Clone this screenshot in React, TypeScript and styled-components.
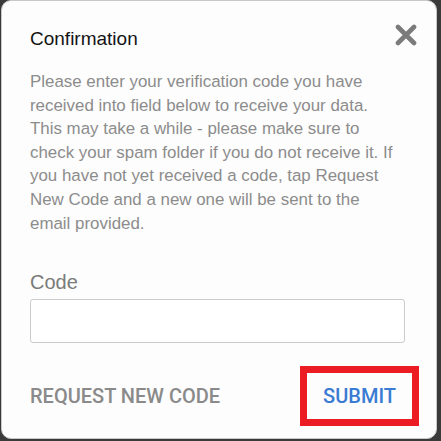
import React from "react";
import styled, { createGlobalStyle } from "styled-components";

const Global = createGlobalStyle`
  html, body {
    margin: 0;
    padding: 0;
    background: #3a3a3a;
    width: 441px;
    height: 441px;
    overflow: hidden;
  }
  * { box-sizing: border-box; }
`;

const Page = styled.div`
  width: 441px;
  height: 441px;
  padding: 0 4px 2px 1px;
`;

const Card = styled.div`
  width: 436px;
  height: 439px;
  background: #fdfdfd;
  border: 1px solid #c9c9c9;
  border-radius: 10px;
  padding: 0 32px 0 28px;
  display: flex;
  flex-direction: column;
  font-family: "Liberation Sans", Arial, sans-serif;
`;

const Header = styled.div`
  margin-top: 23px;
  display: flex;
  justify-content: space-between;
  align-items: flex-start;
`;

const Title = styled.h2`
  margin: 4px 0 0 0;
  font-size: 19px;
  line-height: 22px;
  font-weight: 400;
  color: #141414;
`;

const CloseButton = styled.button`
  width: 22px;
  height: 22px;
  padding: 0;
  margin-right: -13px;
  border: none;
  background: transparent;
  display: flex;
  cursor: pointer;
`;

const Body = styled.p`
  margin: 20px 0 0 0;
  font-size: 16.9px;
  line-height: 23.6px;
  color: #8c8c8c;
`;

const Label = styled.label`
  margin-top: 35px;
  font-size: 20px;
  line-height: 24px;
  color: #7a7a7a;
`;

const Input = styled.input`
  margin-top: 5px;
  width: 375px;
  height: 44px;
  border: 1.5px solid #cbcbcb;
  border-radius: 3px;
  background: #fff;
  outline: none;
`;

const Actions = styled.div`
  margin-top: 23px;
  display: flex;
  justify-content: space-between;
  align-items: center;
`;

const TextButton = styled.button<{ $primary?: boolean; $boxed?: boolean }>`
  font-family: Roboto, "Liberation Sans", sans-serif;
  font-weight: 500;
  font-size: 20px;
  line-height: 24px;
  letter-spacing: 0;
  background: transparent;
  cursor: pointer;
  color: ${(p) => (p.$primary ? "#3a7bd3" : "#8a8a8a")};
  border: ${(p) => (p.$boxed ? "7px solid #ec1c24" : "none")};
  padding: ${(p) => (p.$boxed ? "11px 16px" : "0")};
  margin-right: ${(p) => (p.$boxed ? "-15px" : "0")};
`;

export default function App() {
  return (
    <>
      <Global />
      <Page>
        <Card>
          <Header>
            <Title>Confirmation</Title>
            <CloseButton aria-label="Close">
              <svg width="22" height="22" viewBox="0 0 22 22">
                <path
                  d="M3 3 L19 19 M19 3 L3 19"
                  stroke="#7b7b7b"
                  strokeWidth="4.6"
                  strokeLinecap="round"
                  fill="none"
                />
              </svg>
            </CloseButton>
          </Header>
          <Body>
            Please enter your verification code you have received into field
            below to receive your data. This may take a while - please make sure
            to check your spam folder if you do not receive it. If you have not
            yet received a code, tap Request New Code and a new one will be sent
            to the email provided.
          </Body>
          <Label htmlFor="code">Code</Label>
          <Input id="code" />
          <Actions>
            <TextButton>REQUEST NEW CODE</TextButton>
            <TextButton $primary $boxed>
              SUBMIT
            </TextButton>
          </Actions>
        </Card>
      </Page>
    </>
  );
}
